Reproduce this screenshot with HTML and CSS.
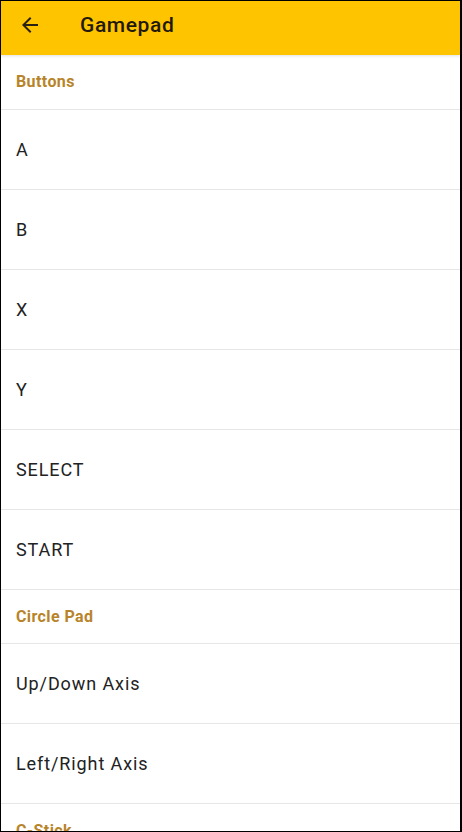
FILE: index.html
```html
<!DOCTYPE html>
<html lang="en">
<head>
  <meta charset="UTF-8">
  <meta name="viewport" content="width=device-width, initial-scale=1.0">
  <title>Gamepad</title>
  <link rel="stylesheet" href="styles.css">
</head>
<body>
  <div class="screen">
    <header class="toolbar">
      <button class="back" aria-label="Back">
        <svg width="24" height="24" viewBox="0 0 24 24">
          <path d="M20 11H7.83l5.59-5.59L12 4l-8 8 8 8 1.41-1.41L7.83 13H20v-2z" fill="#2a2112"/>
        </svg>
      </button>
      <h1>Gamepad</h1>
    </header>

    <div class="list">
      <div class="section first">Buttons</div>
      <div class="row">A</div>
      <div class="row">B</div>
      <div class="row">X</div>
      <div class="row">Y</div>
      <div class="row">SELECT</div>
      <div class="row">START</div>

      <div class="section">Circle Pad</div>
      <div class="row">Up/Down Axis</div>
      <div class="row">Left/Right Axis</div>

      <div class="section">C-Stick</div>
      <div class="row">Up/Down Axis</div>
    </div>
  </div>
</body>
</html>
```

FILE: styles.css
```css
html, body {
  margin: 0;
  padding: 0;
  background: #000;
}
body {
  font-family: Roboto, 'Noto Sans', sans-serif;
  color: #222;
}
.screen {
  box-sizing: border-box;
  width: 462px;
  height: 832px;
  border-top: 1px solid #000;
  border-left: 1px solid #000;
  border-right: 2px solid #000;
  border-bottom: 1px solid #000;
  background: #fff;
  overflow: hidden;
  display: flex;
  flex-direction: column;
}
.toolbar {
  height: 54px;
  box-sizing: border-box;
  padding-bottom: 6px;
  flex-shrink: 0;
  background: #ffc400;
  display: flex;
  align-items: center;
  box-shadow: 0 1px 3px rgba(0, 0, 0, 0.12);
  position: relative;
  z-index: 1;
}
.back {
  background: none;
  border: none;
  padding: 0;
  margin-left: 17px;
  width: 24px;
  height: 24px;
  display: flex;
}
.toolbar h1 {
  margin: 0 0 0 38px;
  font-size: 21px;
  font-weight: 500;
  color: #22190a;
  letter-spacing: 0.6px;
}
.list {
  flex: 1;
  overflow: hidden;
}
.section {
  height: 54px;
  box-sizing: border-box;
  padding: 17px 0 0 15px;
  font-size: 16px;
  font-weight: 700;
  letter-spacing: 0.4px;
  color: #b8842a;
  border-bottom: 1px solid #e6e6e6;
}
.section.first {
  height: 55px;
  padding-top: 17px;
}
.row {
  height: 80px;
  box-sizing: border-box;
  padding-left: 15px;
  display: flex;
  align-items: center;
  font-size: 18px;
  letter-spacing: 0.9px;
  color: #222;
  border-bottom: 1px solid #e6e6e6;
}
```
